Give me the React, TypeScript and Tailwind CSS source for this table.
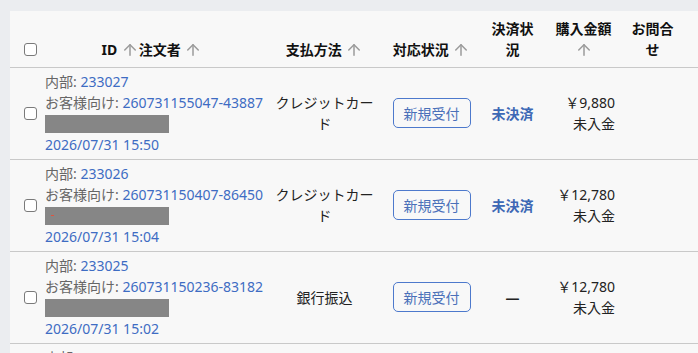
import React from 'react';
import { ArrowUp } from 'lucide-react';

type Order = {
  internal: string;
  customer: string;
  date: string;
  payment: string;
  settlement: string | null;
  amount: string;
  mark?: boolean;
};

const orders: Order[] = [
  { internal: '233027', customer: '260731155047-43887', date: '2026/07/31 15:50', payment: 'クレジットカード', settlement: '未決済', amount: '￥9,880' },
  { internal: '233026', customer: '260731150407-86450', date: '2026/07/31 15:04', payment: 'クレジットカード', settlement: '未決済', amount: '￥12,780', mark: true },
  { internal: '233025', customer: '260731150236-83182', date: '2026/07/31 15:02', payment: '銀行振込', settlement: null, amount: '￥12,780' },
  { internal: '233024', customer: '260731145512-20931', date: '2026/07/31 14:55', payment: '銀行振込', settlement: null, amount: '￥6,480' },
];

const SortIcon = () => (
  <ArrowUp size={18} strokeWidth={2} className="inline-block align-[-4px] text-[#9b9b9b]" />
);

const Checkbox = () => (
  <div className="flex h-[21px] items-center">
    <span className="block h-[13px] w-[13px] rounded-[3px] border border-[#7a7a7a] bg-white" />
  </div>
);

const th = 'border-b border-[#c9c9c9] px-2 py-[7px] align-bottom text-center font-bold text-[#111]';
const td = 'border-b border-[#c9c9c9] px-2 pt-[3px] pb-1 align-middle';

export default function App() {
  return (
    <div className="h-[353px] overflow-hidden bg-[#ebedf0] pt-[11px] pl-[10px] font-['Noto_Sans','Noto_Sans_CJK_JP',sans-serif] text-[14px] leading-[21px] text-[#222]">
      <div className="bg-[#f8f8f8]">
        <table className="w-full table-fixed border-separate border-spacing-0">
          <colgroup>
            <col className="w-[27px]" />
            <col className="w-[230px]" />
            <col className="w-[115px]" />
            <col className="w-[99px]" />
            <col className="w-[63px]" />
            <col className="w-[79px]" />
            <col className="w-[59px]" />
            <col />
          </colgroup>
          <thead>
            <tr>
              <th className="border-b border-[#c9c9c9] pl-[14px] pb-[7px] align-bottom">
                <Checkbox />
              </th>
              <th className={th}>
                ID <SortIcon />注文者 <SortIcon />
              </th>
              <th className={th}>
                支払方法 <SortIcon />
              </th>
              <th className={th}>
                対応状況 <SortIcon />
              </th>
              <th className={th}>決済状況</th>
              <th className={th}>
                購入金額 <SortIcon />
              </th>
              <th className={th}>お問合せ</th>
              <th className="border-b border-[#c9c9c9]" />
            </tr>
          </thead>
          <tbody>
            {orders.map((o) => (
              <tr key={o.internal}>
                <td className="border-b border-[#c9c9c9] pl-[14px] align-middle">
                  <Checkbox />
                </td>
                <td className={`${td} whitespace-nowrap`}>
                  <div>
                    <span className="text-[#666]">内部: </span>
                    <a className="text-[#3e6cc3]">{o.internal}</a>
                  </div>
                  <div>
                    <span className="text-[#666]">お客様向け: </span>
                    <a className="text-[#3e6cc3]">{o.customer}</a>
                  </div>
                  <div className="flex h-[21px] items-center">
                    <span className="relative block h-[18px] w-[124px] bg-[#868686]">
                      {o.mark && <span className="absolute left-[6px] top-[8px] h-px w-[3px] bg-[#e0533f]" />}
                    </span>
                  </div>
                  <div className="text-[#3e6cc3]">{o.date}</div>
                </td>
                <td className={`${td} text-center`}>{o.payment}</td>
                <td className={`${td} text-center`}>
                  <button className="h-[30px] rounded-[5px] border border-[#4d79cc] px-[10px] text-[14px] text-[#4a70b9]">
                    新規受付
                  </button>
                </td>
                <td className={`${td} text-center`}>
                  {o.settlement ? (
                    <span className="font-bold text-[#3d68b5]">{o.settlement}</span>
                  ) : (
                    <span className="font-bold">—</span>
                  )}
                </td>
                <td className={`${td} text-right`}>
                  <div>{o.amount}</div>
                  <div>未入金</div>
                </td>
                <td className={td} />
                <td className="border-b border-[#c9c9c9]" />
              </tr>
            ))}
          </tbody>
        </table>
      </div>
    </div>
  );
}
